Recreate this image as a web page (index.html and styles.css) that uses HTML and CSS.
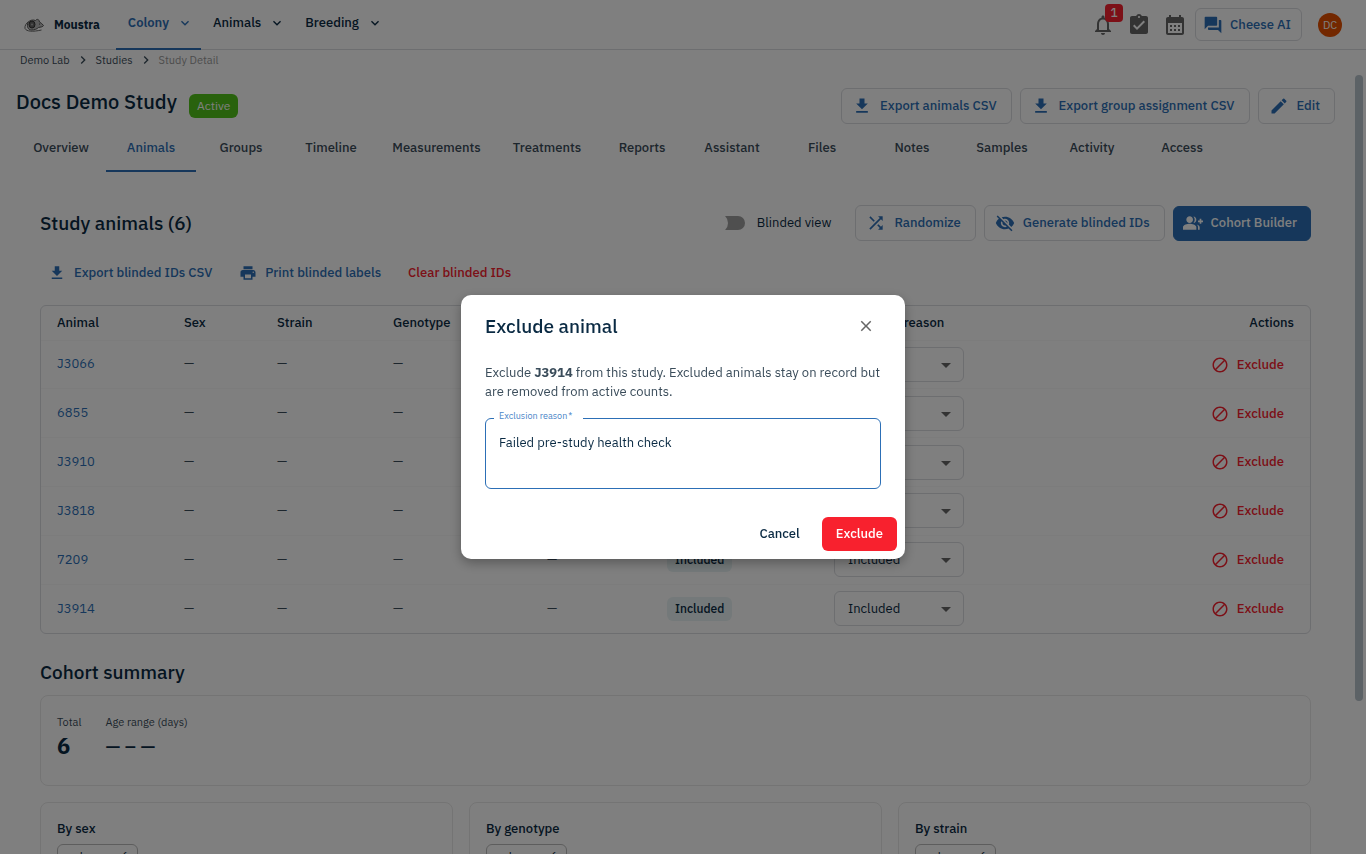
FILE: index.html
```html
<!DOCTYPE html>
<html lang="en">
<head>
    <meta charset="UTF-8">
    <meta name="viewport" content="width=device-width, initial-scale=1.0">
    <title>Docs Demo Study - Moustra</title>
    <link rel="stylesheet" href="styles.css">
</head>
<body>

    <!-- Shared icons -->
    <svg class="sprite" aria-hidden="true">
        <symbol id="i-chevron" viewBox="0 0 24 24"><path d="M7.41 8.59 12 13.17l4.59-4.58L18 10l-6 6-6-6z"/></symbol>
        <symbol id="i-next" viewBox="0 0 24 24"><path d="M10 6 8.59 7.41 13.17 12l-4.58 4.59L10 18l6-6z"/></symbol>
        <symbol id="i-bell" viewBox="0 0 24 24"><path d="M12 22c1.1 0 2-.9 2-2h-4c0 1.1.9 2 2 2m6-6v-5c0-3.07-1.63-5.64-4.5-6.32V4c0-.83-.67-1.5-1.5-1.5s-1.5.67-1.5 1.5v.68C7.64 5.36 6 7.92 6 11v5l-2 2v1h16v-1zm-2 1H8v-6c0-2.48 1.51-4.5 4-4.5s4 2.02 4 4.5z"/></symbol>
        <symbol id="i-task" viewBox="0 0 24 24"><path d="M19 3h-4.18C14.4 1.84 13.3 1 12 1c-1.3 0-2.4.84-2.82 2H5c-1.1 0-2 .9-2 2v14c0 1.1.9 2 2 2h14c1.1 0 2-.9 2-2V5c0-1.1-.9-2-2-2zm-7 0c.55 0 1 .45 1 1s-.45 1-1 1-1-.45-1-1 .45-1 1-1zm-2 14l-4-4 1.41-1.41L10 14.17l6.59-6.59L18 9l-8 8z"/></symbol>
        <symbol id="i-calendar" viewBox="0 0 24 24"><path d="M19 4h-1V2h-2v2H8V2H6v2H5c-1.11 0-1.99.9-1.99 2L3 20c0 1.1.89 2 2 2h14c1.1 0 2-.9 2-2V6c0-1.1-.9-2-2-2zm0 16H5V10h14v10zM9 14H7v-2h2v2zm4 0h-2v-2h2v2zm4 0h-2v-2h2v2zm-8 4H7v-2h2v2zm4 0h-2v-2h2v2zm4 0h-2v-2h2v2z"/></symbol>
        <symbol id="i-chat" viewBox="0 0 24 24"><path d="M21 6h-2v9H6v2c0 .55.45 1 1 1h11l4 4V7c0-.55-.45-1-1-1zm-4 6V3c0-.55-.45-1-1-1H3c-.55 0-1 .45-1 1v14l4-4h10c.55 0 1-.45 1-1z"/></symbol>
        <symbol id="i-download" viewBox="0 0 24 24"><path d="M5 20h14v-2H5v2zM19 9h-4V3H9v6H5l7 7 7-7z"/></symbol>
        <symbol id="i-edit" viewBox="0 0 24 24"><path d="M3 17.25V21h3.75L17.81 9.94l-3.75-3.75zM20.71 7.04c.39-.39.39-1.02 0-1.41l-2.34-2.34a.9959.9959 0 0 0-1.41 0l-1.83 1.83 3.75 3.75z"/></symbol>
        <symbol id="i-shuffle" viewBox="0 0 24 24"><path d="M10.59 9.17 5.41 4 4 5.41l5.17 5.17zM14.5 4l2.04 2.04L4 18.59 5.41 20 17.96 7.46 20 9.5V4zm.33 9.41-1.41 1.41 3.13 3.13L14.5 20H20v-5.5l-2.04 2.04z"/></symbol>
        <symbol id="i-hidden" viewBox="0 0 24 24"><path d="M12 7c2.76 0 5 2.24 5 5 0 .65-.13 1.26-.36 1.83l2.92 2.92c1.51-1.26 2.7-2.89 3.43-4.75-1.73-4.39-6-7.5-11-7.5-1.4 0-2.74.25-3.98.7l2.16 2.16C10.74 7.13 11.35 7 12 7zM2 4.27l2.28 2.28.46.46C3.08 8.3 1.78 10.02 1 12c1.73 4.39 6 7.5 11 7.5 1.55 0 3.03-.3 4.38-.84l.42.42L19.73 22 21 20.73 3.27 3 2 4.27zM7.53 9.8l1.55 1.55c-.05.21-.08.43-.08.65 0 1.66 1.34 3 3 3 .22 0 .44-.03.65-.08l1.55 1.55c-.67.33-1.41.53-2.2.53-2.76 0-5-2.24-5-5 0-.79.2-1.53.53-2.2zm4.31-.78l3.15 3.15.02-.16c0-1.66-1.34-3-3-3l-.17.01z"/></symbol>
        <symbol id="i-group" viewBox="0 0 24 24"><path d="M22 9V7h-2v2h-2v2h2v2h2v-2h2V9zM8 12c2.21 0 4-1.79 4-4s-1.79-4-4-4-4 1.79-4 4 1.79 4 4 4m0 1c-2.67 0-8 1.34-8 4v3h16v-3c0-2.66-5.33-4-8-4m4.51-8.95C13.43 5.11 14 6.49 14 8s-.57 2.89-1.49 3.95C14.47 11.7 16 10.04 16 8s-1.53-3.7-3.49-3.95m4.02 9.78C17.42 14.66 18 15.7 18 17v3h2v-3c0-1.45-1.59-2.51-3.47-3.17"/></symbol>
        <symbol id="i-print" viewBox="0 0 24 24"><path d="M19 8H5c-1.66 0-3 1.34-3 3v6h4v4h12v-4h4v-6c0-1.66-1.34-3-3-3zm-3 11H8v-5h8v5zm3-7c-.55 0-1-.45-1-1s.45-1 1-1 1 .45 1 1-.45 1-1 1zm-1-9H6v4h12V3z"/></symbol>
        <symbol id="i-block" viewBox="0 0 24 24"><path d="M12 2C6.48 2 2 6.48 2 12s4.48 10 10 10 10-4.48 10-10S17.52 2 12 2zM4 12c0-4.42 3.58-8 8-8 1.85 0 3.55.63 4.9 1.69L5.69 16.9C4.63 15.55 4 13.85 4 12zm8 8c-1.85 0-3.55-.63-4.9-1.69L18.31 7.1C19.37 8.45 20 10.15 20 12c0 4.42-3.58 8-8 8z"/></symbol>
        <symbol id="i-drop" viewBox="0 0 24 24"><path d="m7 10 5 5 5-5z"/></symbol>
        <symbol id="i-close" viewBox="0 0 24 24"><path d="M19 6.41 17.59 5 12 10.59 6.41 5 5 6.41 10.59 12 5 17.59 6.41 19 12 13.41 17.59 19 19 17.59 13.41 12z"/></symbol>
    </svg>

    <!-- ===== TOP BAR ===== -->
    <header class="topbar">
        <a href="#" class="brand">
            <svg class="logo" viewBox="0 0 40 30" aria-hidden="true">
                <path d="M9 8C4 12 1 17 2 22c3 6 15 7 33 3" fill="none" stroke="#666" stroke-width="2"/>
                <path d="M8 10c4-5 10-6 15-4 2-3 6-3 7 0l1 3c3 2 6 4 8 7-1 3-6 3-10 4-3 3-8 5-14 5-7 0-10-7-7-15z" fill="#bbb" stroke="#555" stroke-width="2"/>
                <ellipse cx="16" cy="14" rx="6" ry="7" fill="#666" stroke="#333" stroke-width="2"/>
                <circle cx="16" cy="14" r="2" fill="#aaa"/>
                <circle cx="31" cy="13" r="1" fill="#222"/>
            </svg>
            Moustra
        </a>
        <nav class="menu">
            <a href="#" class="active">Colony <svg><use href="#i-chevron"/></svg></a>
            <a href="#">Animals <svg><use href="#i-chevron"/></svg></a>
            <a href="#">Breeding <svg><use href="#i-chevron"/></svg></a>
        </nav>
        <div class="tools">
            <button class="icon-btn" aria-label="Notifications"><svg><use href="#i-bell"/></svg><span class="count">1</span></button>
            <button class="icon-btn" aria-label="Tasks"><svg><use href="#i-task"/></svg></button>
            <button class="icon-btn" aria-label="Calendar"><svg><use href="#i-calendar"/></svg></button>
            <button class="btn chat"><svg><use href="#i-chat"/></svg>Cheese AI</button>
            <button class="avatar">DC</button>
        </div>
    </header>

    <nav class="crumbs">
        <a href="#">Demo Lab</a>
        <svg><use href="#i-next"/></svg>
        <a href="#">Studies</a>
        <svg><use href="#i-next"/></svg>
        <span>Study Detail</span>
    </nav>

    <div class="scroller">
        <main class="page">
            <div class="title-row">
                <h1>Docs Demo Study</h1>
                <span class="badge">Active</span>
                <div class="actions">
                    <button class="btn"><svg><use href="#i-download"/></svg>Export animals CSV</button>
                    <button class="btn"><svg><use href="#i-download"/></svg>Export group assignment CSV</button>
                    <button class="btn"><svg><use href="#i-edit"/></svg>Edit</button>
                </div>
            </div>

            <nav class="tabs">
                <a href="#">Overview</a>
                <a href="#" class="active">Animals</a>
                <a href="#">Groups</a>
                <a href="#">Timeline</a>
                <a href="#">Measurements</a>
                <a href="#">Treatments</a>
                <a href="#">Reports</a>
                <a href="#">Assistant</a>
                <a href="#">Files</a>
                <a href="#">Notes</a>
                <a href="#">Samples</a>
                <a href="#">Activity</a>
                <a href="#">Access</a>
            </nav>

            <!-- Study animals -->
            <section class="panel">
                <div class="panel-head">
                    <h2>Study animals (6)</h2>
                    <label class="switch"><input type="checkbox">Blinded view</label>
                    <div class="actions">
                        <button class="btn"><svg><use href="#i-shuffle"/></svg>Randomize</button>
                        <button class="btn"><svg><use href="#i-hidden"/></svg>Generate blinded IDs</button>
                        <button class="btn primary"><svg><use href="#i-group"/></svg>Cohort Builder</button>
                    </div>
                </div>

                <div class="links">
                    <button class="text-btn"><svg><use href="#i-download"/></svg>Export blinded IDs CSV</button>
                    <button class="text-btn"><svg><use href="#i-print"/></svg>Print blinded labels</button>
                    <button class="text-btn danger">Clear blinded IDs</button>
                </div>

                <div class="table-box">
                    <table>
                        <colgroup>
                            <col class="c-animal"><col class="c-sex"><col class="c-strain"><col class="c-genotype"><col class="c-group"><col class="c-status"><col class="c-reason"><col>
                        </colgroup>
                        <thead>
                            <tr><th>Animal</th><th>Sex</th><th>Strain</th><th>Genotype</th><th>Group</th><th>Status</th><th>Disposition reason</th><th class="right">Actions</th></tr>
                        </thead>
                        <tbody>
                            <tr>
                                <td><a href="#">J3066</a></td><td>—</td><td>—</td><td>—</td><td>—</td>
                                <td><span class="chip">Included</span></td>
                                <td><span class="select"><select aria-label="J3066 status"><option>Included</option></select><svg><use href="#i-drop"/></svg></span></td>
                                <td class="right"><button class="text-btn danger"><svg><use href="#i-block"/></svg>Exclude</button></td>
                            </tr>
                            <tr>
                                <td><a href="#">6855</a></td><td>—</td><td>—</td><td>—</td><td>—</td>
                                <td><span class="chip">Included</span></td>
                                <td><span class="select"><select aria-label="6855 status"><option>Included</option></select><svg><use href="#i-drop"/></svg></span></td>
                                <td class="right"><button class="text-btn danger"><svg><use href="#i-block"/></svg>Exclude</button></td>
                            </tr>
                            <tr>
                                <td><a href="#">J3910</a></td><td>—</td><td>—</td><td>—</td><td>—</td>
                                <td><span class="chip">Included</span></td>
                                <td><span class="select"><select aria-label="J3910 status"><option>Included</option></select><svg><use href="#i-drop"/></svg></span></td>
                                <td class="right"><button class="text-btn danger"><svg><use href="#i-block"/></svg>Exclude</button></td>
                            </tr>
                            <tr>
                                <td><a href="#">J3818</a></td><td>—</td><td>—</td><td>—</td><td>—</td>
                                <td><span class="chip">Included</span></td>
                                <td><span class="select"><select aria-label="J3818 status"><option>Included</option></select><svg><use href="#i-drop"/></svg></span></td>
                                <td class="right"><button class="text-btn danger"><svg><use href="#i-block"/></svg>Exclude</button></td>
                            </tr>
                            <tr>
                                <td><a href="#">7209</a></td><td>—</td><td>—</td><td>—</td><td>—</td>
                                <td><span class="chip">Included</span></td>
                                <td><span class="select"><select aria-label="7209 status"><option>Included</option></select><svg><use href="#i-drop"/></svg></span></td>
                                <td class="right"><button class="text-btn danger"><svg><use href="#i-block"/></svg>Exclude</button></td>
                            </tr>
                            <tr>
                                <td><a href="#">J3914</a></td><td>—</td><td>—</td><td>—</td><td>—</td>
                                <td><span class="chip">Included</span></td>
                                <td><span class="select"><select aria-label="J3914 status"><option>Included</option></select><svg><use href="#i-drop"/></svg></span></td>
                                <td class="right"><button class="text-btn danger"><svg><use href="#i-block"/></svg>Exclude</button></td>
                            </tr>
                        </tbody>
                    </table>
                </div>

                <!-- Cohort summary -->
                <h2 class="summary-title">Cohort summary</h2>
                <div class="card totals">
                    <div>
                        <span class="caption">Total</span>
                        <strong>6</strong>
                    </div>
                    <div>
                        <span class="caption">Age range (days)</span>
                        <strong class="range">— – —</strong>
                    </div>
                </div>
                <div class="card-grid">
                    <div class="card">
                        <h3>By sex</h3>
                        <span class="tag">unknown: 6</span>
                    </div>
                    <div class="card">
                        <h3>By genotype</h3>
                        <span class="tag">unknown: 6</span>
                    </div>
                    <div class="card">
                        <h3>By strain</h3>
                        <span class="tag">unknown: 6</span>
                    </div>
                </div>
            </section>
        </main>
        <div class="scrollbar"><div class="thumb"></div></div>
    </div>

    <!-- ===== EXCLUDE DIALOG ===== -->
    <div class="overlay">
        <form class="dialog" role="dialog" aria-labelledby="dialog-title">
            <div class="dialog-head">
                <h2 id="dialog-title">Exclude animal</h2>
                <button type="button" class="close" aria-label="Close"><svg><use href="#i-close"/></svg></button>
            </div>
            <p>Exclude <b>J3914</b> from this study. Excluded animals stay on record but are removed from active counts.</p>
            <div class="field">
                <label for="reason">Exclusion reason&thinsp;*</label>
                <textarea id="reason" rows="2">Failed pre-study health check</textarea>
            </div>
            <div class="dialog-actions">
                <button type="button" class="cancel">Cancel</button>
                <button type="submit" class="confirm">Exclude</button>
            </div>
        </form>
    </div>
</body>
</html>
```
FILE: styles.css
```css
:root {
    --navy: #0a2a43;
    --slate: #3a4c5a;
    --blue: #2c6fb6;
    --red: #f8212e;
    --line: #dadce0;
}

* { box-sizing: border-box; margin: 0; padding: 0; }
html, body { height: 100%; overflow: hidden; }
body {
    display: flex; flex-direction: column;
    font: 13px/20px "IBM Plex Sans", "Noto Sans", sans-serif;
    background: #fff; color: var(--navy);
}
a { color: inherit; text-decoration: none; }
button, select, textarea { font: inherit; color: inherit; }
button { background: none; border: none; cursor: pointer; white-space: nowrap; }
svg { fill: currentColor; flex: none; }
.sprite { position: absolute; width: 0; height: 0; }
h1, h2 { font-size: 19px; font-weight: 500; line-height: 28px; }
h1 { font-size: 20px; }
h3 { font-size: 13px; font-weight: 500; line-height: 20px; }

/* --- Top bar --- */
.topbar {
    display: flex; flex: none; height: 50px; padding: 0 24px;
    border-bottom: 1px solid var(--line);
}
.brand { display: flex; align-items: center; gap: 10px; font-size: 12px; font-weight: 700; }
.logo { width: 20px; height: 16px; }
.menu { display: flex; margin-left: 16px; }
.menu a {
    display: flex; align-items: center; gap: 8px; height: 50px;
    padding: 0 8px 4px 12px; font-weight: 500;
}
.menu a.active { color: var(--blue); border-bottom: 2px solid var(--blue); font-weight: 600; padding-bottom: 2px; }
.menu svg { width: 16px; height: 16px; }
.tools { display: flex; align-items: center; gap: 4px; margin-left: auto; }
.icon-btn { position: relative; width: 32px; height: 32px; padding: 4px; color: #666; }
.icon-btn svg { display: block; width: 24px; height: 24px; }
.count {
    position: absolute; top: -5px; right: -4px; width: 18px; height: 18px;
    border-radius: 4px; background: var(--red); color: #fff;
    font-size: 12px; line-height: 18px; font-weight: 500;
}
.avatar {
    width: 24px; height: 24px; margin-left: 12px; border-radius: 50%;
    background: #e65100; color: #fff; font-size: 11px;
}

/* --- Buttons --- */
.btn {
    display: flex; align-items: center; gap: 8px; height: 36px; padding: 0 14px 0 10px;
    border: 1px solid var(--line); border-radius: 6px;
    color: var(--blue); font-weight: 500;
}
.btn svg { width: 20px; height: 20px; }
.btn.chat { gap: 7px; height: 33px; padding: 0 10px 0 7px; }
.btn.primary { height: 35px; padding: 0 13px 0 9px; background: var(--blue); border-color: var(--blue); color: #fff; }
.text-btn { display: inline-flex; align-items: center; gap: 8px; color: var(--blue); font-weight: 500; }
.text-btn svg { width: 18px; height: 18px; }
.danger { color: var(--red); }
.actions { display: flex; align-items: center; gap: 8px; }

/* --- Breadcrumbs --- */
.crumbs {
    display: flex; flex: none; align-items: center; gap: 5px;
    height: 20px; margin-bottom: 2px; padding: 0 20px; font-size: 11px; color: var(--slate);
}
.crumbs svg { width: 16px; height: 16px; }
.crumbs span { color: #9a9a9a; }

/* --- Scrolling page --- */
.scroller { display: flex; flex: 1; min-height: 0; }
.page { flex: 1; min-width: 0; padding: 16px 15px 0 16px; }
.scrollbar { flex: none; width: 16px; padding: 3px 3px 0 5px; }
.thumb { height: calc(80% + 3px); border-radius: 4px; background: #b9c4cc; }

.title-row { display: flex; gap: 12px; height: 36px; }
.title-row .actions { margin-left: auto; }
.badge {
    align-self: center; height: 24px; padding: 0 8px; border-radius: 6px;
    background: #52c41a; color: #fff; font-size: 12px; line-height: 24px;
}
.tabs {
    display: grid; height: 48px;
    grid-template-columns: repeat(4, 90px) 121px 100px repeat(7, 90px);
}
.tabs a { height: 48px; text-align: center; line-height: 48px; font-weight: 500; color: var(--slate); }
.tabs a.active { color: var(--blue); border-bottom: 2px solid var(--blue); }

/* --- Study animals --- */
.panel { padding: 33px 24px 0; }
.panel-head { display: flex; align-items: center; height: 36px; }
.switch { display: flex; align-items: center; gap: 12px; margin: 0 24px 0 auto; }
.switch input {
    position: relative; width: 34px; height: 14px; appearance: none;
    border-radius: 7px; background: #9e9e9e;
}
.switch input::before {
    content: ""; position: absolute; top: -3px; left: -3px;
    width: 20px; height: 20px; border-radius: 50%; background: #fff;
}
.links { display: flex; gap: 27px; height: 64px; padding: 0 8px; align-items: center; }

.table-box { border: 1px solid var(--line); border-radius: 6px; }
table { width: 100%; height: 327px; table-layout: fixed; border-collapse: collapse; }
.c-animal { width: 127px; }
.c-sex { width: 93px; }
.c-strain { width: 116px; }
.c-genotype { width: 154px; }
.c-group { width: 120px; }
.c-status { width: 167px; }
.c-reason { width: 162px; }
th, td { padding: 0 16px; text-align: left; white-space: nowrap; }
th { height: 34px; font-weight: 500; }
td { height: 48px; color: var(--slate); border-top: 1px solid #f8f8f8; }
td a { color: var(--blue); }
.right { text-align: right; }
td .text-btn { padding-right: 10px; vertical-align: middle; }
.chip {
    display: inline-block; height: 24px; padding: 0 8px; border-radius: 6px;
    background: #e8f3f4; color: var(--navy); font-size: 12px; line-height: 24px; font-weight: 500;
}
.select { position: relative; display: block; width: 130px; }
.select select {
    display: block; width: 100%; height: 35px; padding: 0 13px; appearance: none;
    border: 1px solid var(--line); border-radius: 6px; background: #fff; color: var(--navy);
}
.select svg { position: absolute; top: 6px; right: 6px; width: 24px; height: 24px; color: #666; }

/* --- Cohort summary --- */
.summary-title { margin: 24px 0 9px; }
.card { padding: 16px; border: 1px solid #e8e8e8; border-radius: 8px; }
.totals { display: flex; gap: 24px; height: 91px; margin-bottom: 16px; }
.caption { display: block; font-size: 11px; color: var(--slate); }
.totals strong { display: block; font-size: 22px; line-height: 28px; }
.totals .range { font-size: 19px; font-weight: 500; }
.card-grid { display: grid; grid-template-columns: repeat(3, 1fr); gap: 16px; }
.tag {
    display: inline-block; height: 24px; margin-top: 5px; padding: 0 8px;
    border: 1px solid #bbb; border-radius: 6px; font-size: 12px; line-height: 22px;
}

/* --- Dialog --- */
.overlay {
    position: fixed; inset: 0; display: flex; align-items: center; justify-content: center;
    background: rgba(0, 0, 0, 0.5);
}
.dialog {
    width: 444px; border-radius: 10px; background: #fff;
    box-shadow: 0 4px 12px rgba(0, 0, 0, 0.3);
}
.dialog-head { display: flex; align-items: center; justify-content: space-between; height: 61px; padding: 0 24px; }
.close { width: 30px; height: 30px; padding: 6px; color: #666; }
.close svg { display: block; width: 18px; height: 18px; }
.dialog p { padding: 7px 24px 0; line-height: 19px; color: var(--slate); }
.field { position: relative; margin: 17px 24px 0; }
.field label {
    position: absolute; top: -9px; left: 9px; padding: 0 11px 0 5px;
    background: #fff; color: #4a86c8; font-size: 9px; line-height: 14px;
}
.field textarea {
    display: block; width: 100%; height: 71px; padding: 14px 13px; resize: none;
    border: 1px solid var(--blue); border-radius: 6px; outline: none; background: #fff;
}
.dialog-actions { display: flex; justify-content: flex-end; gap: 8px; padding: 28px 8px 8px; }
.dialog-actions button { height: 34px; padding: 0 14px; border-radius: 6px; font-weight: 500; }
.confirm { background: var(--red); color: #fff; }
```
